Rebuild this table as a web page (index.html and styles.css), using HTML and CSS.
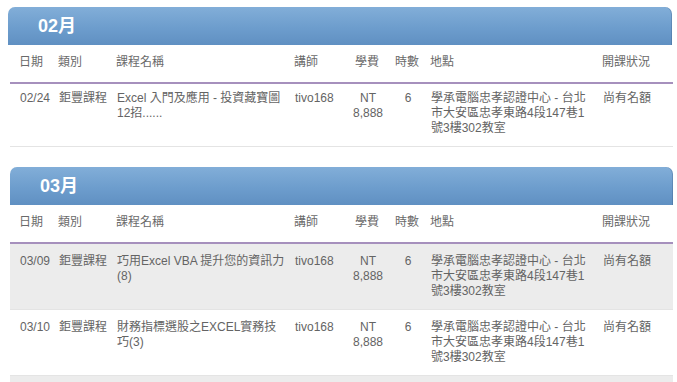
FILE: index.html
```html
<!DOCTYPE html>
<html lang="zh-Hant">
<head>
<meta charset="utf-8">
<title>課程表</title>
<link rel="stylesheet" href="styles.css">
</head>
<body>
<div class="page">
  <section class="panel">
    <h2 class="panel-head panel-head--wide">02月</h2>
    <div class="row row-head">
      <div class="c c-date">日期</div>
      <div class="c c-type">類別</div>
      <div class="c c-name">課程名稱</div>
      <div class="c c-teacher">講師</div>
      <div class="c c-fee">學費</div>
      <div class="c c-hours">時數</div>
      <div class="c c-place">地點</div>
      <div class="c c-status">開課狀況</div>
    </div>
    <div class="row row-compact">
      <div class="c c-date">02/24</div>
      <div class="c c-type">鉅豐課程</div>
      <div class="c c-name">Excel 入門及應用 - 投資藏寶圖12招......</div>
      <div class="c c-teacher">tivo168</div>
      <div class="c c-fee">NT 8,888</div>
      <div class="c c-hours">6</div>
      <div class="c c-place">學承電腦忠孝認證中心 - 台北市大安區忠孝東路4段147巷1號3樓302教室</div>
      <div class="c c-status">尚有名額</div>
    </div>
  </section>

  <section class="panel panel-next">
    <h2 class="panel-head">03月</h2>
    <div class="row row-head">
      <div class="c c-date">日期</div>
      <div class="c c-type">類別</div>
      <div class="c c-name">課程名稱</div>
      <div class="c c-teacher">講師</div>
      <div class="c c-fee">學費</div>
      <div class="c c-hours">時數</div>
      <div class="c c-place">地點</div>
      <div class="c c-status">開課狀況</div>
    </div>
    <div class="row row-alt">
      <div class="c c-date">03/09</div>
      <div class="c c-type">鉅豐課程</div>
      <div class="c c-name">巧用Excel VBA 提升您的資訊力(8)</div>
      <div class="c c-teacher">tivo168</div>
      <div class="c c-fee">NT 8,888</div>
      <div class="c c-hours">6</div>
      <div class="c c-place">學承電腦忠孝認證中心 - 台北市大安區忠孝東路4段147巷1號3樓302教室</div>
      <div class="c c-status">尚有名額</div>
    </div>
    <div class="row">
      <div class="c c-date">03/10</div>
      <div class="c c-type">鉅豐課程</div>
      <div class="c c-name">財務指標選股之EXCEL實務技巧(3)</div>
      <div class="c c-teacher">tivo168</div>
      <div class="c c-fee">NT 8,888</div>
      <div class="c c-hours">6</div>
      <div class="c c-place">學承電腦忠孝認證中心 - 台北市大安區忠孝東路4段147巷1號3樓302教室</div>
      <div class="c c-status">尚有名額</div>
    </div>
    <div class="row row-alt row-more"></div>
  </section>
</div>
</body>
</html>
```

FILE: styles.css
```css
html, body {
  margin: 0;
  padding: 0;
  background: #ffffff;
}

body {
  font-family: "Liberation Sans", "Noto Sans CJK TC", sans-serif;
  font-size: 12px;
  line-height: 15px;
  color: #646464;
}

.page {
  padding: 7px 4px 0 10px;
}

.panel-next {
  margin-top: 20px;
}

.panel-head {
  margin: 0;
  height: 38px;
  display: flex;
  align-items: center;
  padding-left: 30px;
  font-size: 18px;
  font-weight: bold;
  color: #ffffff;
  background: linear-gradient(to bottom, #82aed8 0%, #6d9dcd 55%, #6090c2 100%);
  border-radius: 7px 7px 0 0;
  box-shadow: inset -1px 0 0 rgba(40, 70, 110, 0.25);
}

.panel-head--wide {
  margin-left: -2px;
  margin-right: 1px;
}

.row {
  display: grid;
  grid-template-columns: 39px 58px 178px 53px 40px 40px 175px 1fr;
  padding: 10px 0 10px 10px;
  border-bottom: 1px solid #e4e4e4;
}

.row-head {
  padding: 10px 0 12px 9px;
  border-bottom: 2px solid #a690bd;
  color: #6a6a6a;
}

.row-compact {
  padding-top: 7px;
}

.row-alt {
  background: #ececec;
}

.row-more {
  height: 6px;
  padding: 0;
  border-bottom: 0;
}

.c-name {
  padding-right: 8px;
}

.c-fee,
.c-hours {
  text-align: center;
}

.c-place {
  padding-left: 3px;
  padding-right: 12px;
}
```
